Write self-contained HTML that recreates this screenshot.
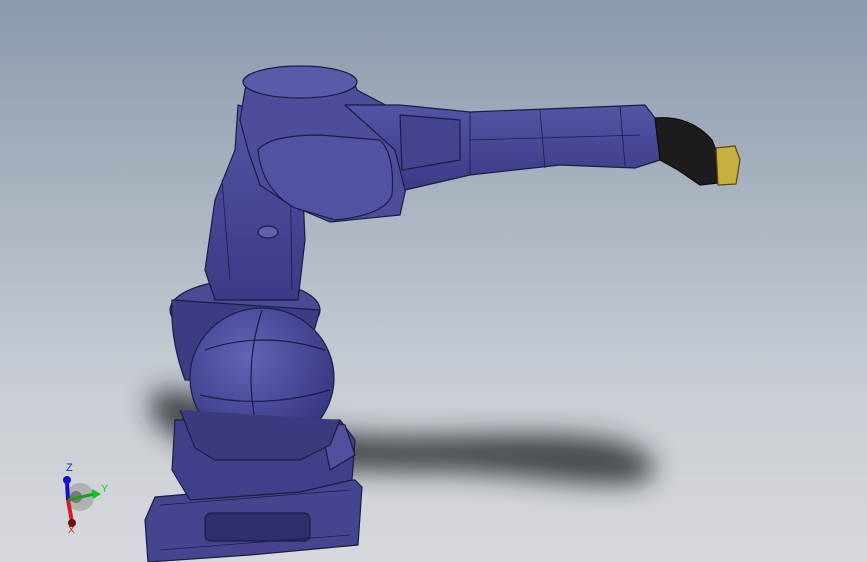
<!DOCTYPE html>
<html><head><style>
html,body{margin:0;padding:0;width:867px;height:562px;overflow:hidden}
body{background:linear-gradient(#8a9aad 0%,#a9b4c0 35%,#c9ced4 70%,#d6d9dc 100%)}
svg{position:absolute;left:0;top:0}
</style></head><body>
<svg width="867" height="562" viewBox="0 0 867 562" xmlns="http://www.w3.org/2000/svg">
<defs>
<filter id="b" x="-20%" y="-50%" width="140%" height="200%"><feGaussianBlur stdDeviation="13"/></filter>
<radialGradient id="sp" cx="0.4" cy="0.35" r="0.7"><stop offset="0" stop-color="#6464b8"/><stop offset="1" stop-color="#343480"/></radialGradient>
<linearGradient id="fa" x1="0" y1="0" x2="0" y2="1"><stop offset="0" stop-color="#5454a6"/><stop offset="1" stop-color="#3a3a86"/></linearGradient>
</defs>
<!-- shadow -->
<path d="M160 390 C200 385 260 425 330 432 C420 442 520 428 600 438 C650 446 672 470 640 482 C600 492 520 472 430 472 C350 472 260 470 180 440 C150 425 140 400 160 390Z" fill="#24262a" opacity="0.8" filter="url(#b)"/>
<g stroke="#1c1c40" stroke-width="1.2" stroke-linejoin="round">
<!-- base plate -->
<path d="M155 497 L355 480 L362 487 L358 545 L250 555 L148 562 L145 520Z" fill="#45458f"/>
<rect x="205" y="513" width="105" height="28" rx="6" fill="#2e2e6a"/>
<path d="M160 505 L350 490 M160 550 L350 535" fill="none" stroke-width="0.8"/>
<!-- lower base -->
<path d="M175 420 L340 420 L355 440 L352 480 L300 492 L190 500 L172 470Z" fill="#40408a"/>
<path d="M320 420 L345 425 L355 455 L330 470Z" fill="#50509c"/>
<!-- waist ring -->
<ellipse cx="245" cy="310" rx="75" ry="30" fill="#4a4a96"/>
<path d="M172 300 Q170 340 185 380 L300 380 L320 310Z" fill="#3c3c84"/>
<!-- lower arm -->
<path d="M238 105 L300 125 L305 240 L298 300 L215 300 L205 270 L215 200 L235 150Z" fill="url(#fa)"/>
<ellipse cx="268" cy="232" rx="10" ry="6" fill="#6060b0"/>
<path d="M222 180 L230 280 M290 150 L292 290" fill="none" stroke-width="0.8"/>
<!-- sphere motor -->
<ellipse cx="262" cy="378" rx="72" ry="70" fill="url(#sp)"/>
<path d="M200 395 Q262 410 330 390 M205 350 Q262 330 325 350 M262 310 Q240 378 262 446" fill="none"/>
<path d="M180 410 L195 448 L215 460 L300 460 L330 445 L340 420" fill="#3a3a80"/>
<!-- elbow housing -->
<path d="M245 90 Q250 70 300 68 Q350 68 357 90 L395 110 L410 170 L400 215 L330 222 L290 205 L260 185 L248 150 L240 120Z" fill="#4d4d9c"/>
<ellipse cx="300" cy="82" rx="57" ry="16" fill="#5a5aaa"/>
<path d="M258 150 Q270 135 320 135 L380 140 Q395 155 392 195 Q385 215 335 220 L295 208 Q262 190 258 150Z" fill="#5252a2"/>
<!-- forearm -->
<path d="M345 105 L400 105 L470 112 L645 105 L658 122 L660 160 L635 168 L560 165 L470 175 L405 190 L395 150Z" fill="url(#fa)"/>
<path d="M470 112 L470 175 M540 110 L545 168 M620 106 L625 166 M470 140 L640 135" fill="none" stroke-width="0.8"/>
<path d="M400 115 L460 120 L460 160 L402 170Z" fill="#44448e"/>
<!-- wrist -->
<path d="M655 118 Q690 115 712 140 L720 160 L718 183 L700 185 L678 170 L660 160Z" fill="#1c1c1c" stroke="#0a0a0a"/>
<path d="M716 148 L735 146 L740 160 L736 184 L718 185Z" fill="#c8b040" stroke="#5a4a10"/>
</g>
<!-- triad -->
<circle cx="80" cy="497" r="14" fill="#9a9a9a" opacity="0.6"/>
<circle cx="76" cy="497" r="6" fill="#555" opacity="0.6"/>
<line x1="68" y1="500" x2="67" y2="482" stroke="#1010c0" stroke-width="4"/>
<circle cx="67" cy="480" r="4" fill="#1010d0"/>
<line x1="68" y1="500" x2="94" y2="494" stroke="#18a018" stroke-width="3"/>
<path d="M92 489 L101 494 L93 499Z" fill="#18c018"/>
<line x1="68" y1="500" x2="72" y2="522" stroke="#d02020" stroke-width="4"/>
<circle cx="72" cy="523" r="4" fill="#701010"/>
<text x="66" y="471" font-family="Liberation Sans,sans-serif" font-size="11" fill="#2020e0">Z</text>
<text x="101" y="492" font-family="Liberation Sans,sans-serif" font-size="11" fill="#20d020">Y</text>
<text x="68" y="533" font-family="Liberation Sans,sans-serif" font-size="10" fill="#e02020">X</text>
</svg>
</body></html>
